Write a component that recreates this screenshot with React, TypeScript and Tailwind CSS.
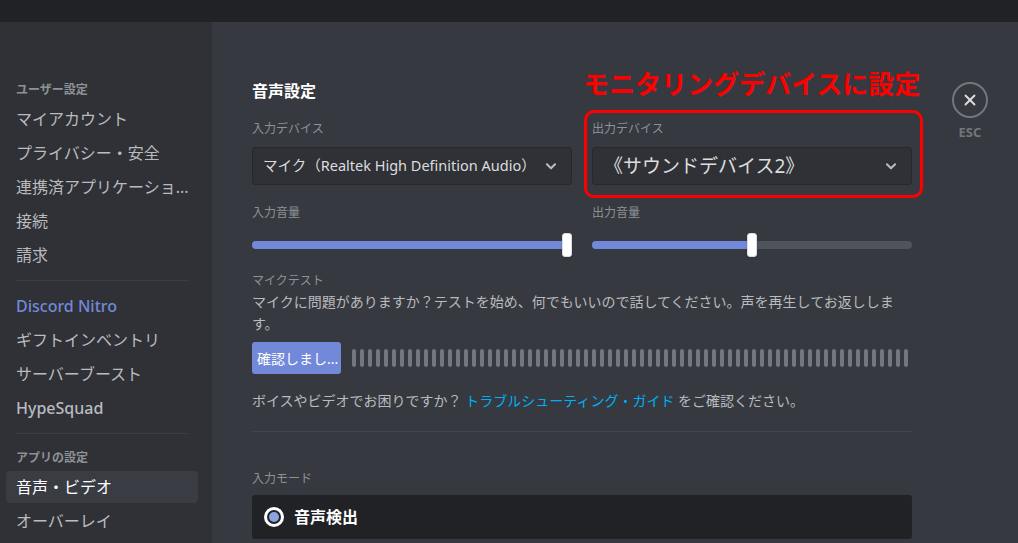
import React from "react";
import { X } from "lucide-react";

const navGroups = [
  {
    title: "ユーザー設定",
    items: ["マイアカウント", "プライバシー・安全", "連携済アプリケーショ...", "接続", "請求"],
  },
  {
    title: "",
    items: ["Discord Nitro", "ギフトインベントリ", "サーバーブースト", "HypeSquad"],
  },
  {
    title: "アプリの設定",
    items: ["音声・ビデオ", "オーバーレイ"],
  },
];

const Chevron = () => (
  <svg width="14" height="14" viewBox="0 0 24 24" className="text-[#b9bbbe]">
    <path
      d="M5 9l7 7 7-7"
      fill="none"
      stroke="currentColor"
      strokeWidth="3.5"
      strokeLinecap="round"
      strokeLinejoin="round"
    />
  </svg>
);

const Slider = ({ value }: { value: number }) => (
  <div className="relative h-[24px] mt-[12px]">
    <div className="absolute left-0 right-0 top-[8px] h-[8px] rounded-full bg-[#4f545c]" />
    <div
      className="absolute left-0 top-[8px] h-[8px] rounded-full bg-[#7289da]"
      style={{ width: `${value}%` }}
    />
    <div
      className="absolute top-0 w-[10px] h-[24px] rounded-[3px] bg-white border border-[#dcddde] shadow"
      style={{ left: `calc(${value}% - ${value === 100 ? 10 : 5}px)` }}
    />
  </div>
);

const Label = ({ children, className = "" }: { children: React.ReactNode; className?: string }) => (
  <div className={`text-[12px] leading-[16px] text-[#8e9297] ${className}`}>{children}</div>
);

export default function App() {
  const bars = Array.from({ length: 70 }, (_, i) => i);

  return (
    <div className="w-[1018px] h-[543px] overflow-hidden flex flex-col font-['Noto_Sans','Noto_Sans_CJK_JP',sans-serif] bg-[#36393f]">
      <div className="h-[22px] bg-[#202225] shrink-0" />
      <div className="flex flex-1 min-h-0">
        {/* sidebar */}
        <nav className="w-[212px] shrink-0 bg-[#2f3136] pt-[60px] pl-[6px] pr-[14px]">
          {navGroups.map((group, gi) => (
            <div key={gi}>
              {gi > 0 && <div className="mx-[10px] h-px bg-[#3b3e44] mt-[9px] mb-[9px]" />}
              {group.title && (
                <div
                  className={`px-[10px] text-[12px] leading-[16px] font-bold text-[#8e9297] mb-[5px] ${
                    gi > 0 ? "mt-[16px]" : ""
                  }`}
                >
                  {group.title}
                </div>
              )}
              {group.items.map((item) => {
                const selected = item === "音声・ビデオ";
                const nitro = item === "Discord Nitro";
                return (
                  <div
                    key={item}
                    className={`h-[32px] mb-[2px] px-[10px] flex items-center rounded-[4px] text-[16px] whitespace-nowrap ${
                      selected
                        ? "bg-[#393c43] text-white"
                        : nitro
                        ? "text-[#7289da] font-medium"
                        : item === "HypeSquad"
                        ? "text-[#b9bbbe] font-medium"
                        : "text-[#b9bbbe]"
                    }`}
                  >
                    {item}
                  </div>
                );
              })}
            </div>
          ))}
        </nav>

        {/* main */}
        <main className="flex-1 flex pl-[40px] pt-[59px]">
          <div className="w-[660px] shrink-0">
            <h2 className="text-[16px] leading-[20px] font-bold text-white mb-[20px]">音声設定</h2>

            <div className="grid grid-cols-2 gap-x-[20px]">
              <div>
                <Label className="mb-[10px]">入力デバイス</Label>
                <div className="h-[38px] rounded-[3px] bg-[#2f3136] border border-[#27292d] flex items-center justify-between pl-[10px] pr-[13px]">
                  <span className="text-[14.5px] text-[#dcddde] whitespace-nowrap">
                    マイク（Realtek High Definition Audio）
                  </span>
                  <Chevron />
                </div>
                <Label className="mt-[20px]">入力音量</Label>
                <Slider value={100} />
              </div>

              <div className="relative">
                <div className="absolute left-[-9px] top-[-50px] text-[26px] leading-[26px] font-bold text-[#ff0000] whitespace-nowrap">
                  モニタリングデバイスに設定
                </div>
                <div className="absolute left-[-8px] top-[-11px] w-[339px] h-[88px] rounded-[10px] border-[3px] border-[#ff0000]" />
                <Label className="mb-[10px]">出力デバイス</Label>
                <div className="h-[38px] rounded-[3px] bg-[#2f3136] border border-[#27292d] flex items-center justify-between pl-[11px] pr-[13px]">
                  <span className="text-[19px] text-[#dcddde] whitespace-nowrap">《サウンドデバイス2》</span>
                  <Chevron />
                </div>
                <Label className="mt-[20px]">出力音量</Label>
                <Slider value={50} />
              </div>
            </div>

            <Label className="mt-[16px]">マイクテスト</Label>
            <p className="mt-[2px] text-[14px] leading-[22px] text-[#b9bbbe]">
              マイクに問題がありますか？テストを始め、何でもいいので話してください。声を再生してお返しします。
            </p>
            <div className="mt-[7px] flex items-center gap-[11px]">
              <button className="w-[89px] h-[32px] shrink-0 rounded-[3px] bg-[#7289da] text-white text-[14px] px-[5px] text-left whitespace-nowrap overflow-hidden">
                確認しまし...
              </button>
              <div className="flex gap-[4px] h-[18px]">
                {bars.map((b) => (
                  <div key={b} className="w-[4px] h-full rounded-full bg-[#72767d]" />
                ))}
              </div>
            </div>

            <p className="mt-[18px] text-[14px] leading-[18px] text-[#b9bbbe]">
              ボイスやビデオでお困りですか？ <span className="text-[#00b0f4]">トラブルシューティング・ガイド</span>{" "}
              をご確認ください。
            </p>

            <div className="mt-[21px] h-px bg-[#42454a]" />

            <Label className="mt-[39px]">入力モード</Label>
            <div className="mt-[8px] h-[44px] rounded-[3px] bg-[#202225] flex items-center px-[12px] gap-[10px]">
              <div className="w-[20px] h-[20px] rounded-full border-[3px] border-white flex items-center justify-center">
                <div className="w-[10px] h-[10px] rounded-full bg-[#8ea1e1]" />
              </div>
              <span className="text-[16px] font-bold text-white">音声検出</span>
            </div>
          </div>

          {/* close */}
          <div className="ml-[40px] flex flex-col items-center pt-[1px]">
            <div className="w-[36px] h-[36px] rounded-full border-2 border-[#72767d] flex items-center justify-center text-[#dcddde]">
              <X size={18} strokeWidth={2.5} />
            </div>
            <div className="mt-[6px] text-[13px] leading-[16px] font-bold text-[#72767d]">ESC</div>
          </div>
        </main>
      </div>
    </div>
  );
}
